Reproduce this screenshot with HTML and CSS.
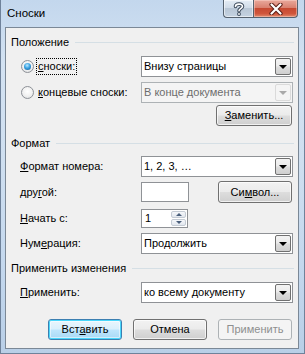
FILE: index.html
```html
<!DOCTYPE html>
<html lang="ru">
<head>
<meta charset="utf-8">
<title>Сноски</title>
<link rel="stylesheet" href="styles.css">
</head>
<body>
<div class="window">
  <div class="titlebar">
    <span class="title">Сноски</span>
    <div class="caption-buttons">
      <div class="cbtn help">
        <svg width="12" height="14" viewBox="0 0 12 14"><path d="M2.5 4.5 C2.5 1.5 9.5 1.2 9.5 4.3 C9.5 6.5 6 6.6 6 8.8" fill="none" stroke="#3d4b5c" stroke-width="3.6" stroke-linecap="round"/><path d="M2.5 4.5 C2.5 1.5 9.5 1.2 9.5 4.3 C9.5 6.5 6 6.6 6 8.8" fill="none" stroke="#fff" stroke-width="1.6" stroke-linecap="round"/><circle cx="6" cy="12" r="1.9" fill="#3d4b5c"/><circle cx="6" cy="12" r="0.9" fill="#fff"/></svg>
      </div>
      <div class="cbtn close">
        <svg width="14" height="12" viewBox="0 0 14 12"><path d="M2.5 1.5 L11.5 10.5 M11.5 1.5 L2.5 10.5" stroke="#5a1e17" stroke-width="4.2" stroke-linecap="round"/><path d="M2.5 1.5 L11.5 10.5 M11.5 1.5 L2.5 10.5" stroke="#fff" stroke-width="2.2" stroke-linecap="round"/></svg>
      </div>
    </div>
  </div>
  <div class="client">
    <div class="group-head first"><span>Положение</span><i class="rule"></i></div>

    <div class="row r-foot">
      <div class="lbl radio-lbl"><span class="radio checked"></span><span class="focus"><u>с</u>носки:</span></div>
      <div class="combo"><span class="val">Внизу страницы</span><span class="drop"><i class="tri"></i></span></div>
    </div>

    <div class="row r-end">
      <div class="lbl radio-lbl"><span class="radio"></span><span class="txt"><u>к</u>онцевые сноски:</span></div>
      <div class="combo disabled"><span class="val">В конце документа</span><span class="drop"><i class="tri"></i></span></div>
    </div>

    <div class="row r-replace">
      <div class="btn w-replace"><u>З</u>аменить...</div>
    </div>

    <div class="group-head second"><span>Формат</span><i class="rule"></i></div>

    <div class="row r-fmt">
      <div class="lbl"><u>Ф</u>ормат номера:</div>
      <div class="combo"><span class="val">1, 2, 3, …</span><span class="drop"><i class="tri"></i></span></div>
    </div>

    <div class="row r-other">
      <div class="lbl">дру<u>г</u>ой:</div>
      <div class="textbox small"></div>
      <div class="btn w-symbol">Си<u>м</u>вол...</div>
    </div>

    <div class="row r-start">
      <div class="lbl"><u>Н</u>ачать с:</div>
      <div class="textbox spin"><span class="val">1</span><span class="spinbtns"><span class="sb up"><i></i></span><span class="sb down"><i></i></span></span></div>
    </div>

    <div class="row r-num">
      <div class="lbl">Нум<u>е</u>рация:</div>
      <div class="combo"><span class="val">Продолжить</span><span class="drop"><i class="tri"></i></span></div>
    </div>

    <div class="group-head third"><span>Применить изменения</span><i class="rule"></i></div>

    <div class="row r-apply">
      <div class="lbl"><u>П</u>рименить:</div>
      <div class="combo"><span class="val">ко всему документу</span><span class="drop"><i class="tri"></i></span></div>
    </div>

    <div class="footer">
      <div class="btn default">Вст<u>а</u>вить</div>
      <div class="btn">Отмена</div>
      <div class="btn disabled">Применить</div>
    </div>
  </div>
</div>
</body>
</html>
```

FILE: styles.css
```css
* { box-sizing: border-box; }
html, body { margin: 0; padding: 0; }
body {
  font-family: "Liberation Sans", Arial, sans-serif;
  font-size: 11px;
  color: #000;
  width: 305px;
  height: 354px;
  overflow: hidden;
}
u { text-decoration: underline; text-underline-offset: 1px; }

.window {
  width: 305px;
  height: 354px;
  border: 1px solid #6f829a;
  border-top: 0;
  background: linear-gradient(180deg, #c3d7ed 0%, #d3e2f2 18%, #cfdff0 45%, #c4d8ee 75%, #b9cfe7 100%);
  display: flex;
  flex-direction: column;
  padding: 0 5px 4px 4px;
}

.titlebar {
  height: 27px;
  display: flex;
  align-items: flex-start;
  flex-shrink: 0;
}
.title {
  margin-top: 5px;
  margin-left: 2px;
  line-height: 16px;
  font-size: 11.5px;
  color: #000;
}
.caption-buttons {
  margin-left: auto;
  display: flex;
  margin-right: 1px;
}
.cbtn {
  height: 18px;
  display: flex;
  align-items: center;
  justify-content: center;
  border: 1px solid #56626f;
  border-top: 0;
}
.cbtn.help {
  width: 30px;
  border-radius: 0 0 0 4px;
  border-right: 0;
  background: linear-gradient(180deg, #e4ecf5 0%, #d1dce8 45%, #b9c7d6 50%, #c5d3e2 100%);
  box-shadow: inset 0 0 0 1px rgba(255,255,255,0.55);
}
.cbtn.close {
  width: 45px;
  border-radius: 0 0 4px 0;
  background: linear-gradient(180deg, #e9a99c 0%, #d98170 45%, #c64a32 50%, #d0563c 80%, #e08b6e 100%);
  box-shadow: inset 0 0 0 1px rgba(255,220,210,0.45);
}

.client {
  flex: 1;
  border: 1px solid #7b8896;
  background: #f0f0f0;
  padding: 0 4px 0 5px;
  display: flex;
  flex-direction: column;
}

.group-head {
  display: flex;
  align-items: center;
  height: 15px;
  line-height: 15px;
  white-space: nowrap;
}
.group-head .rule {
  flex: 1;
  height: 1px;
  background: #d5dfe5;
  margin-left: 6px;
}
.group-head.first { margin-top: 7px; }
.group-head.second { margin-top: 10px; }
.group-head.third { margin-top: 7px; }

.row {
  display: flex;
  align-items: center;
  height: 21px;
  padding-right: 1px;
}
.lbl {
  width: 130px;
  flex-shrink: 0;
  padding-left: 9px;
  white-space: nowrap;
  line-height: 15px;
}
.radio-lbl {
  display: flex;
  align-items: center;
  padding-left: 10px;
}
.radio {
  width: 13px;
  height: 13px;
  border-radius: 50%;
  border: 1px solid #8d9197;
  background: radial-gradient(circle at 50% 40%, #ffffff 0%, #f0f0f0 55%, #d5d8dc 100%);
  margin-right: 3px;
  position: relative;
  flex-shrink: 0;
}
.radio.checked::after {
  content: "";
  position: absolute;
  left: 2px;
  top: 2px;
  width: 7px;
  height: 7px;
  border-radius: 50%;
  background: radial-gradient(circle at 45% 35%, #bfe8ff 0%, #3aa4e3 45%, #10508f 100%);
}
.focus {
  outline: 1px dotted #000;
  outline-offset: 0;
  padding: 0 1px;
}
.txt { padding-left: 1px; }

.r-foot { margin-top: 6px; }
.r-end { margin-top: 5px; }
.r-replace { margin-top: 2px; justify-content: flex-end; }
.r-fmt { margin-top: 5px; }
.r-other { margin-top: 4px; height: 22px; }
.r-start { margin-top: 5px; height: 20px; }
.r-num { margin-top: 5px; }
.r-apply { margin-top: 6px; }

.combo {
  flex: 1;
  height: 21px;
  border: 1px solid #8f9296;
  background: #fff;
  display: flex;
  align-items: center;
  padding: 1px;
}
.combo .val {
  flex: 1;
  padding-left: 1px;
  line-height: 15px;
  white-space: nowrap;
  overflow: hidden;
}
.combo .drop {
  width: 16px;
  height: 100%;
  border: 1px solid #707070;
  border-radius: 2px;
  background: linear-gradient(180deg, #f3f3f3 0%, #ebebeb 48%, #dddddd 52%, #cfcfcf 100%);
  display: flex;
  align-items: center;
  justify-content: center;
}
.tri {
  width: 0;
  height: 0;
  border-left: 4px solid transparent;
  border-right: 4px solid transparent;
  border-top: 4px solid #000;
}
.combo.disabled {
  background: #f4f4f4;
  border-color: #adb2b5;
  color: #6d6d6d;
}
.combo.disabled .drop {
  border-color: #dadada;
  background: #f4f4f4;
}
.combo.disabled .tri { border-top-color: #a9a9a9; }

.textbox {
  border: 1px solid #8f9296;
  background: #fff;
}
.textbox.small {
  width: 48px;
  height: 20px;
}
.textbox.spin {
  width: 47px;
  height: 19px;
  display: flex;
  align-items: center;
  padding: 1px 1px 1px 3px;
}
.textbox.spin .val { flex: 1; line-height: 15px; }
.spinbtns {
  width: 15px;
  height: 100%;
  display: flex;
  flex-direction: column;
  gap: 1px;
}
.sb {
  flex: 1;
  border: 1px solid #c4cbd4;
  border-radius: 2px;
  background: linear-gradient(180deg, #f5f7fa 0%, #e2e7ee 100%);
  display: flex;
  align-items: center;
  justify-content: center;
}
.sb i {
  width: 0;
  height: 0;
  border-left: 3px solid transparent;
  border-right: 3px solid transparent;
}
.sb.up i { border-bottom: 3px solid #4a5f7c; }
.sb.down i { border-top: 3px solid #4a5f7c; }

.btn {
  height: 21px;
  border: 1px solid #707070;
  border-radius: 3px;
  background: linear-gradient(180deg, #f2f2f2 0%, #ebebeb 48%, #dddddd 52%, #cfcfcf 100%);
  box-shadow: inset 0 0 0 1px rgba(255,255,255,0.7);
  display: flex;
  align-items: center;
  justify-content: center;
  white-space: nowrap;
  line-height: 15px;
}
.w-replace { width: 76px; margin-right: 1px; }
.w-symbol { width: 74px; margin-left: auto; margin-right: 1px; height: 22px; }

.footer {
  display: flex;
  justify-content: flex-end;
  gap: 11px;
  margin-top: 16px;
  padding-right: 2px;
}
.footer .btn { width: 74px; }
.btn.default {
  border-color: #3c7fb1;
  box-shadow: inset 0 0 0 1px #48d7fb, inset 0 0 0 2px rgba(255,255,255,0.5);
  background: linear-gradient(180deg, #eaf6fd 0%, #d9f0fc 48%, #bee6fd 52%, #a7d9f5 100%);
}
.btn.disabled {
  border-color: #adb2b5;
  background: #f4f4f4;
  box-shadow: none;
  color: #8e8f8f;
}
```
